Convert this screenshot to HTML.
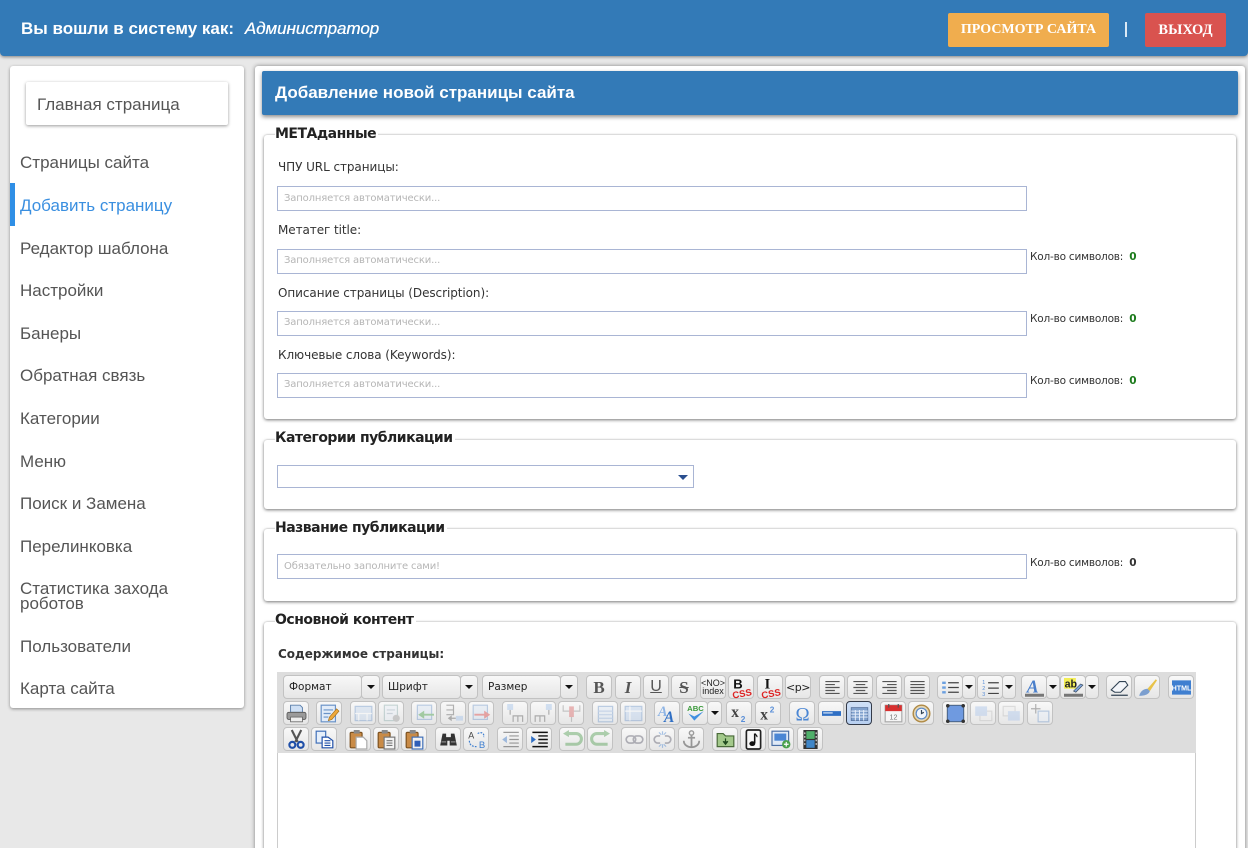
<!DOCTYPE html>
<html lang="ru"><head><meta charset="utf-8"><title>Добавление новой страницы сайта</title>
<style>
*{box-sizing:border-box}
html{margin:0;padding:0;width:1248px;height:848px;overflow:hidden}
body{margin:0;padding:0;width:1248px;height:848px;overflow:hidden;position:relative;background:#e8e8e8;font-family:"Liberation Sans",sans-serif;color:#333}
.a{position:absolute}
.hdr{left:0;top:0;width:1248px;height:56px;background:#337ab7;border-radius:0 0 4px 4px;box-shadow:0 1px 3px rgba(0,0,0,.45)}
.ht{left:21px;top:19px;font:bold 17px/20px "Liberation Sans",sans-serif;color:#fff;white-space:nowrap}
.ht i{font-weight:normal;margin-left:6px;letter-spacing:-.05px;text-shadow:.3px 0 0 #fff}
.btn{top:13px;height:34px;border-radius:2px;color:#fff;font:bold 14px/34px "Liberation Serif",serif;text-align:center;white-space:nowrap}
.side{left:10px;top:66px;width:234px;height:642px;background:#fff;border-radius:3px;box-shadow:0 1px 3px rgba(0,0,0,.4)}
.home{left:26px;top:82px;width:202px;height:43px;background:#fff;border-radius:2px;box-shadow:0 1px 3px rgba(0,0,0,.4);font-size:17px;line-height:45px;padding-left:11px;color:#555}
.m{left:20px;margin-top:2px;font-size:17px;line-height:20px;color:#555;white-space:nowrap}
.main{left:255px;top:66px;width:990px;height:790px;background:#fff;border-radius:3px;box-shadow:0 0 4px rgba(0,0,0,.45)}
.title{left:262px;top:71px;width:976px;height:44px;background:#337ab7;border-radius:2px;box-shadow:0 2px 4px rgba(0,0,0,.45);color:#fff;font:bold 17px/44px "Liberation Sans",sans-serif;padding-left:13px}
.fs{left:264px;width:972px;background:#fff;border-radius:3px;box-shadow:0 1px 3px rgba(0,0,0,.55),0 -1px 1px rgba(0,0,0,.05)}
.lg{left:275px;margin-top:1px;font:bold 14px/18px "DejaVu Sans",sans-serif;color:#222;background:#fff;padding-right:2px;white-space:nowrap;letter-spacing:-.5px}
.lb{left:278px;font:12px/16px "DejaVu Sans",sans-serif;color:#333;white-space:nowrap;letter-spacing:-.07px}
.in{left:277px;width:750px;height:25px;border:1px solid #a9b5d4;background:#fff;font:10px/23px "DejaVu Sans",sans-serif;color:#b5b5b5;padding-left:6px;letter-spacing:-.15px;white-space:nowrap}
.in.u{line-height:21px}
.cn{left:1030px;font:10.5px/14px "DejaVu Sans",sans-serif;color:#333;white-space:nowrap;letter-spacing:-.2px}
.cn b{color:#1b7a1b;margin-left:3px}
.tb{left:277px;top:672px;width:919px;height:81px;background:#ddd}
.ed{left:277px;top:753px;width:919px;height:100px;background:#fff;border:1px solid #ccc;border-top:0}
.b{position:absolute;height:24px;background:linear-gradient(#f8f8f8,#e6e6e6);border:1px solid #c2c2c2;border-radius:4px;display:flex;align-items:center;justify-content:center;color:#333}
.b svg{width:19px;height:19px;display:block;overflow:visible;flex:none}
.d svg{opacity:.42}
.r1{top:675px}.r2{top:701px}.r3{top:727px}
.c{font:10.5px/22px "DejaVu Sans",sans-serif;justify-content:flex-start;padding-left:5px;color:#222}
.ar{padding:0;justify-content:center}
.ar:after{content:"";border:4.5px solid transparent;border-top:4.5px solid #111;border-bottom:0}
.act{background:linear-gradient(#cfe0f7,#b7cff0);border-color:#333a48}
</style></head><body>
<div class="a hdr"></div>
<div class="a ht">Вы вошли в систему как: <i>Администратор</i></div>
<div class="a btn" style="left:948px;width:161px;background:#f0ad4e">ПРОСМОТР САЙТА</div>
<div class="a" style="left:1125px;top:22px;width:2px;height:15px;background:#dbe9f5"></div>
<div class="a btn" style="left:1145px;width:81px;background:#d9534f;font-size:14.5px">ВЫХОД</div>

<div class="a side"></div>
<div class="a home">Главная страница</div>
<div class="a m" style="top:151px">Страницы сайта</div>
<div class="a" style="left:10px;top:183px;width:5px;height:43px;background:#2f8fe6"></div>
<div class="a m" style="top:194px;color:#3a8fe0">Добавить страницу</div>
<div class="a m" style="top:237px">Редактор шаблона</div>
<div class="a m" style="top:279px">Настройки</div>
<div class="a m" style="top:322px">Банеры</div>
<div class="a m" style="top:364px">Обратная связь</div>
<div class="a m" style="top:407px">Категории</div>
<div class="a m" style="top:450px">Меню</div>
<div class="a m" style="top:492px">Поиск и Замена</div>
<div class="a m" style="top:535px">Перелинковка</div>
<div class="a m" style="top:579px;line-height:15px">Статистика захода<br>роботов</div>
<div class="a m" style="top:635px">Пользователи</div>
<div class="a m" style="top:677px">Карта сайта</div>

<div class="a main"></div>
<div class="a title">Добавление новой страницы сайта</div>

<div class="a fs" style="top:135px;height:284px"></div>
<div class="a lg" style="top:124px">МЕТАданные</div>
<div class="a lb" style="top:159px">ЧПУ URL страницы:</div>
<div class="a in" style="top:186px">Заполняется автоматически...</div>
<div class="a lb" style="top:222px">Метатег title:</div>
<div class="a in u" style="top:249px">Заполняется автоматически...</div>
<div class="a cn" style="top:250px">Кол-во символов: <b>0</b></div>
<div class="a lb" style="top:285px">Описание страницы (Description):</div>
<div class="a in u" style="top:311px">Заполняется автоматически...</div>
<div class="a cn" style="top:312px">Кол-во символов: <b>0</b></div>
<div class="a lb" style="top:347px">Ключевые слова (Keywords):</div>
<div class="a in u" style="top:373px">Заполняется автоматически...</div>
<div class="a cn" style="top:374px">Кол-во символов: <b>0</b></div>

<div class="a fs" style="top:440px;height:69px"></div>
<div class="a lg" style="top:428px">Категории публикации</div>
<div class="a in" style="top:465px;width:417px;height:23px"></div>
<div class="a" style="left:678px;top:475px;border:5px solid transparent;border-top:5px solid #2a4f8f;border-bottom:0"></div>

<div class="a fs" style="top:529px;height:72px"></div>
<div class="a lg" style="top:518px">Название публикации</div>
<div class="a in" style="top:554px">Обязательно заполните сами!</div>
<div class="a cn" style="top:556px">Кол-во символов: <b style="color:#333">0</b></div>

<div class="a fs" style="top:622px;height:240px"></div>
<div class="a lg" style="top:610px">Основной контент</div>
<div class="a lb" style="top:646px;font-weight:bold;letter-spacing:0">Содержимое страницы:</div>

<div class="a tb"></div>
<div class="a ed"></div>

<!-- row 1 -->
<div class="b r1 c" style="left:283px;width:79px">Формат</div><div class="b r1 ar" style="left:361px;width:19px"></div>
<div class="b r1 c" style="left:382px;width:79px">Шрифт</div><div class="b r1 ar" style="left:460px;width:18px"></div>
<div class="b r1 c" style="left:482px;width:79px">Размер</div><div class="b r1 ar" style="left:560px;width:18px"></div>

<div class="b r1" style="left:586px;width:26px;font:bold 17px/1 'Liberation Serif',serif;color:#555">B</div>
<div class="b r1" style="left:615px;width:26px;font:italic bold 17px/1 'Liberation Serif',serif;color:#555">I</div>
<div class="b r1" style="left:643px;width:26px;font:16px/1 'Liberation Sans',sans-serif;color:#555;text-decoration:underline">U</div>
<div class="b r1" style="left:671px;width:26px;font:bold 17px/1 'Liberation Serif',serif;color:#555;text-decoration:line-through">S</div>
<div class="b r1" style="left:700px;width:26px;font:9px/8px 'Liberation Sans',sans-serif;text-align:center;color:#222"><span>&lt;NO&gt;<br>index</span></div>
<div class="b r1" style="left:728px;width:26px"><svg viewBox="0 0 16 16"><text x="1" y="9" font-family="Liberation Sans" font-size="11" font-weight="bold" fill="#111">B</text><text x="0" y="16" font-family="Liberation Sans" font-size="8" font-weight="bold" fill="#d22" transform="rotate(-10 8 12)">CSS</text></svg></div>
<div class="b r1" style="left:757px;width:26px"><svg viewBox="0 0 16 16"><text x="3" y="9" font-family="Liberation Serif" font-size="12" font-weight="bold" fill="#111">I</text><text x="0" y="16" font-family="Liberation Sans" font-size="8" font-weight="bold" fill="#d22" transform="rotate(-10 8 12)">CSS</text></svg></div>
<div class="b r1" style="left:785px;width:26px;font:11px/1 'DejaVu Sans',sans-serif;color:#222;letter-spacing:-.5px">&lt;p&gt;</div>

<div class="b r1" style="left:819px;width:26px"><svg viewBox="0 0 16 16"><path d="M2 3h12M2 5.500h8M2 8h12M2 10.500h8M2 13h12" stroke="#555" fill="none"/></svg></div>
<div class="b r1" style="left:847px;width:26px"><svg viewBox="0 0 16 16"><path d="M2 3h12M4 5.500h8M2 8h12M4 10.500h8M2 13h12" stroke="#555" fill="none"/></svg></div>
<div class="b r1" style="left:876px;width:26px"><svg viewBox="0 0 16 16"><path d="M2 3h12M6 5.500h8M2 8h12M6 10.500h8M2 13h12" stroke="#555" fill="none"/></svg></div>
<div class="b r1" style="left:904px;width:26px"><svg viewBox="0 0 16 16"><path d="M2 3h12M2 5.500h12M2 8h12M2 10.500h12M2 13h12" stroke="#555" fill="none"/></svg></div>

<div class="b r1" style="left:937px;width:26px"><svg viewBox="0 0 16 16"><path d="M1 3h3v2H1zM1 7h3v2H1zM1 11h3v2H1z" fill="#6a9fe0"/><path d="M6 4h9M6 8h9M6 12h9" stroke="#444" fill="none"/></svg></div>
<div class="b r1 ar" style="left:962px;width:14px"></div>
<div class="b r1" style="left:977px;width:26px"><svg viewBox="0 0 16 16"><text x="1" y="5" font-size="4.500" fill="#5a8fd8" font-family="Liberation Sans">1</text><text x="1" y="10" font-size="4.500" fill="#5a8fd8" font-family="Liberation Sans">2</text><text x="1" y="15" font-size="4.500" fill="#5a8fd8" font-family="Liberation Sans">3</text><path d="M6 4h9M6 8.500h9M6 13h9" stroke="#444" fill="none"/></svg></div>
<div class="b r1 ar" style="left:1002px;width:14px"></div>
<div class="b r1" style="left:1021px;width:26px"><svg viewBox="0 0 16 16"><text x="1.500" y="12" font-family="Liberation Serif" font-size="15" font-weight="bold" font-style="italic" fill="#4a7fcb">A</text><path d="M0 14.500h16" stroke="#777" stroke-width="2.500"/></svg></div>
<div class="b r1 ar" style="left:1046px;width:14px"></div>
<div class="b r1" style="left:1060px;width:26px"><svg viewBox="0 0 16 16"><rect x="0" y="0" width="10" height="9" fill="#f3ee55"/><text x=".5" y="8" font-family="Liberation Sans" font-size="9" font-weight="bold" fill="#222">ab</text><path d="M8 11l6-6 2 1-6 6z" fill="#7ea2d8" stroke="#345" stroke-width=".5"/><path d="M0 14.500h16" stroke="#777" stroke-width="2.500"/></svg></div>
<div class="b r1 ar" style="left:1085px;width:14px"></div>
<div class="b r1" style="left:1106px;width:26px"><svg viewBox="0 0 16 16"><path d="M1 10l7-7h5l2 3-6 6H4z" fill="#f4f6fa" stroke="#345" stroke-width=".9"/><path d="M1 14.500h14" stroke="#345"/></svg></div>
<div class="b r1" style="left:1134px;width:26px"><svg viewBox="0 0 16 16"><path d="M8 9L15 1l1 1-6 9z" fill="#e8c34a"/><path d="M1 15c1-4 4-6 7-6l2 2c-1 3-5 4-9 4z" fill="#7c9fcf"/></svg></div>
<div class="b r1" style="left:1168px;width:26px"><svg viewBox="0 0 16 16"><rect x="0" y="2" width="16" height="12" fill="#3f7fd0"/><text x="8" y="10.500" text-anchor="middle" font-family="Liberation Sans" font-size="6" font-weight="bold" fill="#fff">HTML</text></svg></div>

<!-- row 2 -->
<div class="b r2" style="left:283px;width:26px"><svg viewBox="0 0 16 16"><path d="M4 1h7l2 2v4H3V1z" fill="#cfe0f5" stroke="#5c7faa" stroke-width=".8"/><rect x="0" y="7" width="16" height="6" rx="1.500" fill="#9a9a9a" stroke="#555" stroke-width=".7"/><rect x="3" y="11" width="10" height="4" fill="#eee" stroke="#666" stroke-width=".7"/></svg></div>
<div class="b r2" style="left:316px;width:26px"><svg viewBox="0 0 16 16"><rect x="1" y="1" width="12" height="14" fill="#e2ecf9" stroke="#6a93c8"/><path d="M3 5h8M3 8h6M3 11h4" stroke="#6a93c8"/><path d="M7 14l1-3 6-7 2 2-6 7z" fill="#eea93c" stroke="#a06a12" stroke-width=".5"/></svg></div>
<div class="b r2 d" style="left:350px;width:26px"><svg viewBox="0 0 16 16"><rect x="1" y="2" width="14" height="12" fill="#c3d6ee" stroke="#6a93c8"/><path d="M1 8h14M4 8v6M11 8v6" stroke="#fff"/></svg></div>
<div class="b r2 d" style="left:378px;width:26px"><svg viewBox="0 0 16 16"><rect x="2" y="1" width="11" height="13" fill="#e9eff8" stroke="#8aa"/><path d="M4 5h7M4 8h5" stroke="#9ab"/><circle cx="12" cy="12" r="3" fill="#999"/></svg></div>
<div class="b r2 d" style="left:411px;width:26px"><svg viewBox="0 0 16 16"><rect x="2" y="1" width="12" height="12" fill="#d8e5f5" stroke="#6a93c8"/><path d="M4 9h12M4 9l3-2v4z" stroke="#3b9a3b" fill="#3b9a3b" stroke-width="1.500"/></svg></div>
<div class="b r2 d" style="left:440px;width:26px"><svg viewBox="0 0 16 16"><path d="M2 1h6v8H2M2 5h6" fill="none" stroke="#555"/><path d="M4 12h6M4 12l2-1.500v3z" stroke="#555"/><rect x="10" y="10" width="6" height="4" fill="#9fc0ea"/></svg></div>
<div class="b r2 d" style="left:468px;width:26px"><svg viewBox="0 0 16 16"><rect x="1" y="1" width="12" height="12" fill="#d8e5f5" stroke="#6a93c8"/><path d="M2 9h12M14 9l-3-2v4z" stroke="#d83b3b" fill="#d83b3b" stroke-width="1.500"/></svg></div>
<div class="b r2 d" style="left:502px;width:26px"><svg viewBox="0 0 16 16"><rect x="1" y="0" width="5" height="5" fill="#9fc0ea"/><path d="M3.500 5v4" stroke="#555"/><path d="M6 15v-5h4v5M10 10h4v5" fill="none" stroke="#555"/></svg></div>
<div class="b r2 d" style="left:530px;width:26px"><svg viewBox="0 0 16 16"><rect x="10" y="0" width="5" height="5" fill="#9fc0ea"/><path d="M12.500 5v4" stroke="#555"/><path d="M1 15v-5h4v5M5 10h4v5" fill="none" stroke="#555"/></svg></div>
<div class="b r2 d" style="left:558px;width:26px"><svg viewBox="0 0 16 16"><path d="M1 1v5h14V1M8 6v9" stroke="#888" fill="none"/><rect x="6" y="2" width="4" height="9" fill="#d86060"/></svg></div>
<div class="b r2 d" style="left:592px;width:26px"><svg viewBox="0 0 16 16"><rect x="2" y="2" width="12" height="13" fill="#dce8f7" stroke="#6a93c8"/><path d="M2 6h12M2 9h12M2 12h12" stroke="#8fb0dc"/></svg></div>
<div class="b r2 d" style="left:620px;width:26px"><svg viewBox="0 0 16 16"><rect x="1" y="2" width="14" height="12" fill="#b7cfee" stroke="#6a93c8"/><path d="M1 6h14M5 2v12" stroke="#fff"/></svg></div>
<div class="b r2" style="left:654px;width:26px"><svg viewBox="0 0 16 16"><text x="0" y="10" font-family="Liberation Serif" font-size="12" font-weight="bold" font-style="italic" fill="#8fb5e5">A</text><text x="5" y="15" font-family="Liberation Serif" font-size="13" font-weight="bold" font-style="italic" fill="#2f6fc4">A</text></svg></div>
<div class="b r2" style="left:682px;width:26px"><svg viewBox="0 0 16 16"><text x="8" y="6" text-anchor="middle" font-family="Liberation Sans" font-size="6.500" font-weight="bold" fill="#3a9a3a">ABC</text><path d="M2 8l5 6 8-8-8 4.500z" fill="#3f8fe0"/></svg></div>
<div class="b r2 ar" style="left:707px;width:15px"></div>
<div class="b r2" style="left:726px;width:26px"><svg viewBox="0 0 16 16"><text x="1" y="11" font-family="Liberation Serif" font-size="13" font-weight="bold" fill="#444">x</text><text x="9" y="15" font-family="Liberation Sans" font-size="7" font-weight="bold" fill="#5a8fd8">2</text></svg></div>
<div class="b r2" style="left:755px;width:26px"><svg viewBox="0 0 16 16"><text x="1" y="13" font-family="Liberation Serif" font-size="13" font-weight="bold" fill="#444">x</text><text x="9" y="7" font-family="Liberation Sans" font-size="7" font-weight="bold" fill="#5a8fd8">2</text></svg></div>
<div class="b r2" style="left:789px;width:26px"><svg viewBox="0 0 16 16"><text x="8" y="14" text-anchor="middle" font-family="Liberation Serif" font-size="16" fill="#4a86d4">Ω</text></svg></div>
<div class="b r2" style="left:818px;width:26px"><svg viewBox="0 0 16 16"><rect x="0" y="6" width="16" height="4" fill="#2f6fc4"/><path d="M1 7.500h8" stroke="#dbe8f8"/></svg></div>
<div class="b r2 act" style="left:846px;width:26px"><svg viewBox="0 0 16 16"><rect x="1" y="3" width="14" height="11" fill="#7fa0cc" stroke="#556f99" stroke-width=".6"/><path d="M1 6h14M1 8.500h14M1 11h14M4.500 5v9M8 5v9M11.500 5v9" stroke="#e8f0fb" stroke-width=".8"/></svg></div>
<div class="b r2" style="left:880px;width:26px"><svg viewBox="0 0 16 16"><rect x="1" y="1" width="14" height="14" fill="#f6f6f6" stroke="#aaa"/><rect x="1" y="1" width="14" height="5" fill="#d83030"/><path d="M4 0v3M12 0v3" stroke="#555"/><text x="8" y="13" text-anchor="middle" font-size="6" font-family="Liberation Sans" fill="#777">12</text></svg></div>
<div class="b r2" style="left:908px;width:26px"><svg viewBox="0 0 16 16"><circle cx="8" cy="8" r="7" fill="#e3d6b5" stroke="#b08a45" stroke-width="1.200"/><circle cx="8" cy="8" r="4.500" fill="#f2f6fb" stroke="#5c8ac8"/><path d="M8 5v3l2-1" stroke="#345" fill="none"/></svg></div>
<div class="b r2" style="left:942px;width:26px"><svg viewBox="0 0 16 16"><rect x="1" y="1" width="14" height="14" fill="#6f9ae0" stroke="#345" stroke-width=".6"/><circle cx="1.500" cy="1.500" r="1.500" fill="#333"/><circle cx="14.500" cy="1.500" r="1.500" fill="#333"/><circle cx="1.500" cy="14.500" r="1.500" fill="#333"/><circle cx="14.500" cy="14.500" r="1.500" fill="#333"/></svg></div>
<div class="b r2 d" style="left:970px;width:26px"><svg viewBox="0 0 16 16"><rect x="5" y="6" width="10" height="8" fill="#eee" stroke="#bbb"/><rect x="1" y="2" width="10" height="8" fill="#a7c2ea"/></svg></div>
<div class="b r2 d" style="left:998px;width:26px"><svg viewBox="0 0 16 16"><rect x="1" y="2" width="10" height="8" fill="#eee" stroke="#bbb"/><rect x="5" y="6" width="10" height="8" fill="#a7c2ea"/></svg></div>
<div class="b r2 d" style="left:1027px;width:26px"><svg viewBox="0 0 16 16"><path d="M4 0v8M0 4h8" stroke="#555"/><rect x="6" y="6" width="9" height="9" fill="#e8eff9" stroke="#6a93c8"/></svg></div>

<!-- row 3 -->
<div class="b r3" style="left:283px;width:26px"><svg viewBox="0 0 16 16"><path d="M4 0l5 10M12 0L7 10" stroke="#555" stroke-width="1.800"/><circle cx="4.500" cy="12.500" r="2.500" fill="none" stroke="#1f4fa8" stroke-width="1.800"/><circle cx="11.500" cy="12.500" r="2.500" fill="none" stroke="#1f4fa8" stroke-width="1.800"/></svg></div>
<div class="b r3" style="left:311px;width:26px"><svg viewBox="0 0 16 16"><rect x="1" y="1" width="8" height="10" fill="#e6effa" stroke="#3f6fb8"/><path d="M6 6h5l4 3v6H6z" fill="#fff" stroke="#1f4fa8"/><path d="M8 9h5M8 11h5M8 13h5" stroke="#1f4fa8"/></svg></div>
<div class="b r3" style="left:345px;width:26px"><svg viewBox="0 0 16 16"><rect x="1" y="2" width="10" height="13" rx="1" fill="#c98b47" stroke="#7d5220"/><rect x="4" y="0" width="5" height="3" fill="#888"/><path d="M6 6h6l3 3v7H6z" fill="#fff" stroke="#aaa"/></svg></div>
<div class="b r3" style="left:373px;width:26px"><svg viewBox="0 0 16 16"><rect x="1" y="2" width="10" height="13" rx="1" fill="#c98b47" stroke="#7d5220"/><rect x="4" y="0" width="5" height="3" fill="#888"/><rect x="6" y="6" width="9" height="10" fill="#f3f3f3" stroke="#777"/><path d="M8 9h5M8 11h5M8 13h5" stroke="#777"/></svg></div>
<div class="b r3" style="left:401px;width:26px"><svg viewBox="0 0 16 16"><rect x="1" y="2" width="10" height="13" rx="1" fill="#c98b47" stroke="#7d5220"/><rect x="4" y="0" width="5" height="3" fill="#888"/><rect x="6" y="6" width="9" height="10" fill="#f3f3f3" stroke="#3f6fb8"/><rect x="8" y="9" width="5" height="5" fill="#2f5fb8"/></svg></div>
<div class="b r3" style="left:435px;width:26px"><svg viewBox="0 0 16 16"><path d="M3 3h3v3h4V3h3l2 10H9V9H7v4H1z" fill="#333"/><path d="M2 10h4M10 10h4" stroke="#888"/></svg></div>
<div class="b r3" style="left:463px;width:26px"><svg viewBox="0 0 16 16"><text x="1" y="7" font-size="7.500" font-family="Liberation Sans" fill="#444">A</text><text x="10" y="15" font-size="8" font-family="Liberation Sans" fill="#3f7fd0">B</text><path d="M9 3c3-2 6 0 5 3M2 9c0 4 3 5 6 5" stroke="#3f7fd0" fill="none" stroke-dasharray="1.500 1"/></svg></div>
<div class="b r3 d" style="left:497px;width:26px"><svg viewBox="0 0 16 16"><path d="M2 2h13M7 5h8M7 8h8M7 11h8M2 14h13" stroke="#222"/><path d="M1 8l4-3v6z" fill="#2f6fc4"/></svg></div>
<div class="b r3" style="left:526px;width:26px"><svg viewBox="0 0 16 16"><path d="M2 2h13M7 5h8M7 8h8M7 11h8M2 14h13" stroke="#111" stroke-width="1.200"/><path d="M5 8L1 5v6z" fill="#2f6fc4"/></svg></div>
<div class="b r3 d" style="left:559px;width:26px"><svg viewBox="0 0 16 16"><path d="M4 3h7a4 4 0 010 9H2" fill="none" stroke="#4a9a4a" stroke-width="2.600"/><path d="M0 3l5-3v6z" fill="#4a9a4a"/></svg></div>
<div class="b r3 d" style="left:587px;width:26px"><svg viewBox="0 0 16 16"><path d="M12 3H5a4 4 0 000 9h9" fill="none" stroke="#4a9a4a" stroke-width="2.600"/><path d="M16 3l-5-3v6z" fill="#4a9a4a"/></svg></div>
<div class="b r3 d" style="left:621px;width:26px"><svg viewBox="0 0 16 16"><rect x="1" y="5" width="8" height="6" rx="3" fill="none" stroke="#556" stroke-width="1.400"/><rect x="7" y="5" width="8" height="6" rx="3" fill="none" stroke="#556" stroke-width="1.400"/></svg></div>
<div class="b r3 d" style="left:649px;width:26px"><svg viewBox="0 0 16 16"><path d="M6 5H4a3 3 0 000 6h2M10 5h2a3 3 0 010 6h-2" fill="none" stroke="#556" stroke-width="1.400"/><path d="M8 1v3M5 2l2 2M11 2L9 4M8 15v-3M5 14l2-2M11 14l-2-2" stroke="#3f7fd0"/></svg></div>
<div class="b r3 d" style="left:678px;width:26px"><svg viewBox="0 0 16 16"><circle cx="8" cy="2.500" r="1.800" fill="none" stroke="#222" stroke-width="1.200"/><path d="M8 4v11M5 6.500h6M1.500 9c0 4 4 5.500 6.500 5.500S14.500 13 14.500 9" fill="none" stroke="#222" stroke-width="1.500"/></svg></div>
<div class="b r3" style="left:712px;width:26px"><svg viewBox="0 0 16 16"><path d="M1 3h5l2 2h7v9H1z" fill="#a3c98b" stroke="#4a6a3a"/><path d="M8 7v4M6 9.500L8 12l2-2.500" stroke="#1f4a1f" fill="#1f4a1f"/></svg></div>
<div class="b r3" style="left:740px;width:26px"><svg viewBox="0 0 16 16"><rect x="2" y="0" width="12" height="16" rx="1.500" fill="#f7f7f7" stroke="#222" stroke-width="1.400"/><path d="M9 3v8" stroke="#111" stroke-width="1.300"/><path d="M9 3c1 1 2 1.500 2 3" stroke="#111" fill="none"/><ellipse cx="7" cy="11.500" rx="2.500" ry="2" fill="#111"/></svg></div>
<div class="b r3" style="left:768px;width:26px"><svg viewBox="0 0 16 16"><rect x="0" y="1" width="14" height="12" fill="#dfe9f6" stroke="#4a6fa5"/><rect x="2" y="3" width="10" height="6" fill="#4a86d4"/><circle cx="12" cy="12" r="3.500" fill="#4aa04a"/><path d="M10 12h4M12 10v4" stroke="#fff"/></svg></div>
<div class="b r3" style="left:797px;width:26px"><svg viewBox="0 0 16 16"><rect x="2" y="0" width="12" height="16" fill="#333"/><rect x="4.500" y="1" width="7" height="6.500" fill="#4fb06a"/><rect x="4.500" y="8.500" width="7" height="6.500" fill="#3f86c8"/><path d="M3.200 2v12M12.800 2v12" stroke="#ddd" stroke-dasharray="1.500 1.500"/></svg></div>
</body></html>
